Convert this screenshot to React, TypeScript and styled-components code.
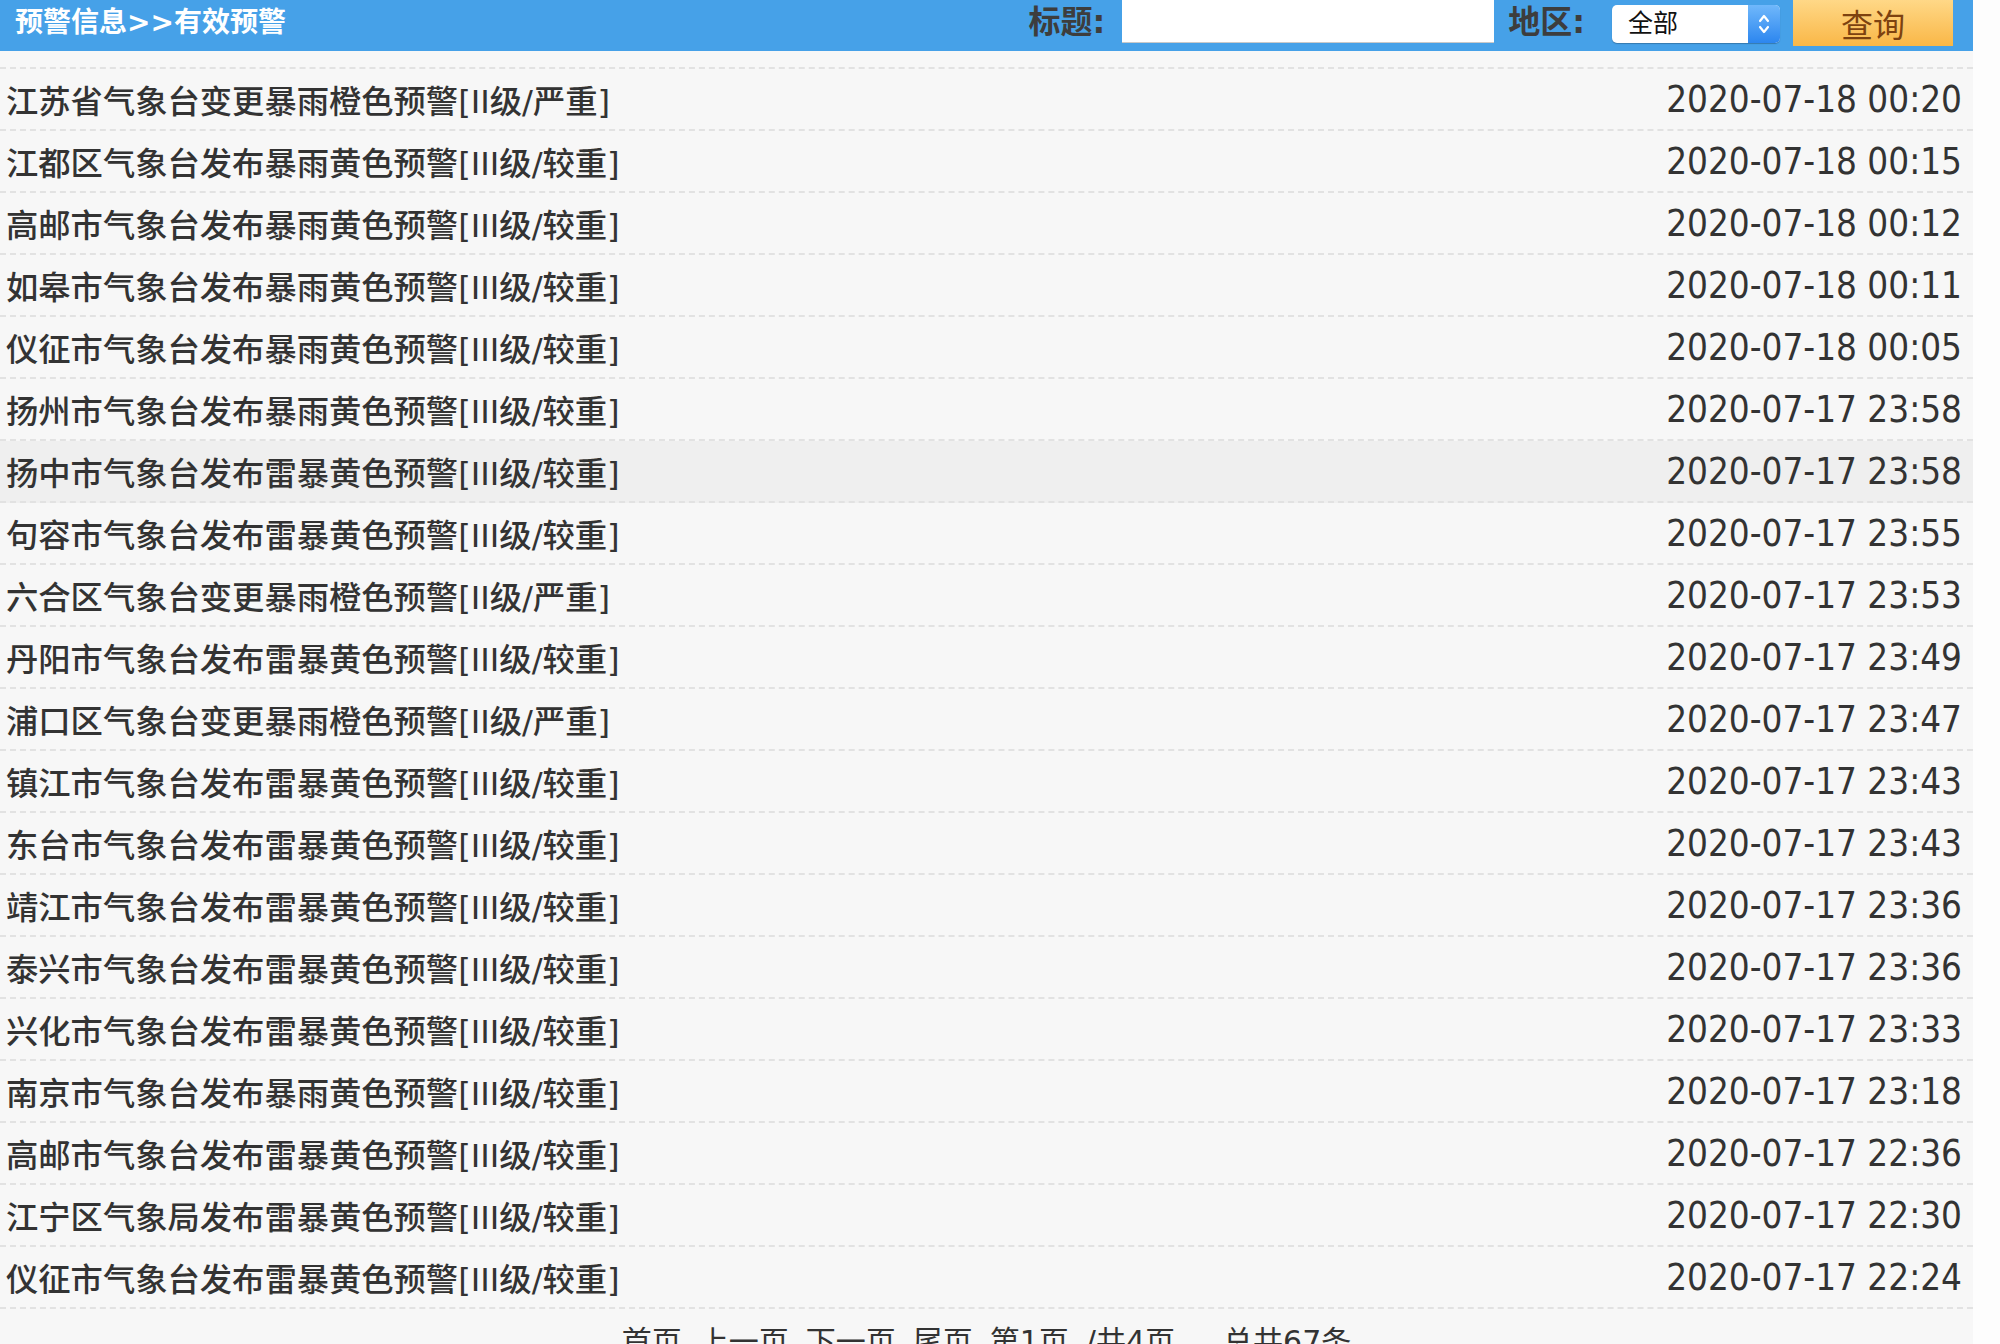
import React from 'react';
import styled, { createGlobalStyle } from 'styled-components';

const GlobalStyle = createGlobalStyle`
  html, body {
    margin: 0;
    padding: 0;
    background: #fdfdfd;
  }
  body {
    font-family: "DejaVu Sans", "Noto Sans CJK SC", sans-serif;
    color: #333;
    overflow: hidden;
  }
`;

const Page = styled.div`
  width: 1973px;
  min-height: 1344px;
  background: #f7f7f7;
`;

const Header = styled.header`
  height: 51px;
  background: #46a1e8;
  display: flex;
  align-items: flex-start;
  padding: 0 20px 0 15px;
  box-sizing: border-box;
`;

const Crumb = styled.div`
  flex: 1;
  font-size: 28px;
  font-weight: bold;
  color: #fff;
  line-height: 46px;
  white-space: nowrap;
`;

const Label = styled.label<{ $gap: number }>`
  font-size: 32px;
  font-weight: bold;
  color: #3d3d3d;
  line-height: 44px;
  margin-right: ${(p) => p.$gap}px;
  white-space: nowrap;
`;

const TitleInput = styled.input`
  width: 372px;
  height: 43px;
  box-sizing: border-box;
  border: none;
  border-bottom: 1px solid #c9c9c9;
  background: #fff;
  margin: 0 14px 0 0;
  padding: 0 8px;
  outline: none;
  font-size: 24px;
`;

const Select = styled.div`
  width: 168px;
  height: 38px;
  margin: 5px 13px 0 0;
  display: flex;
  background: #fff;
  border-radius: 5px;
  box-shadow: 0 1px 1px rgba(0, 0, 0, 0.25);
  overflow: hidden;
`;

const SelectValue = styled.span`
  flex: 1;
  padding-left: 16px;
  font-size: 25px;
  line-height: 38px;
  color: #111;
`;

const Stepper = styled.span`
  width: 32px;
  display: flex;
  align-items: center;
  justify-content: center;
  background: linear-gradient(#70b8fb, #2c86ef);
`;

const SearchButton = styled.button`
  width: 160px;
  height: 46px;
  border: none;
  background: linear-gradient(#ffd887, #f9b747);
  color: #7d4210;
  font-family: "Noto Sans CJK SC", sans-serif;
  font-size: 32px;
  line-height: 44px;
  padding: 0;
`;

const List = styled.ul`
  list-style: none;
  margin: 16px 0 0;
  padding: 0;
  border-top: 2px dashed #e2e2e2;
`;

const Row = styled.li<{ $active?: boolean }>`
  height: 60px;
  display: flex;
  align-items: center;
  justify-content: space-between;
  padding: 0 11px 0 6px;
  border-bottom: 2px dashed #e2e2e2;
  background: ${(p) => (p.$active ? '#efefef' : 'transparent')};
`;

const RowTitle = styled.span`
  font-size: 32.3px;
  font-weight: 500;
  white-space: nowrap;
`;

const RowTime = styled.span`
  font-family: "DejaVu Sans Condensed", "DejaVu Sans", sans-serif;
  font-stretch: condensed;
  font-size: 36.5px;
  white-space: nowrap;
`;

const Pager = styled.div`
  display: flex;
  justify-content: center;
  gap: 17px;
  padding-top: 2px;
  font-size: 30px;
  line-height: 62px;
  color: #333;
`;

const PagerItem = styled.span<{ $wide?: boolean }>`
  margin-left: ${(p) => (p.$wide ? 31 : 0)}px;
  white-space: nowrap;
`;

const rows: [string, string][] = [
  ['江苏省气象台变更暴雨橙色预警[II级/严重]', '2020-07-18 00:20'],
  ['江都区气象台发布暴雨黄色预警[III级/较重]', '2020-07-18 00:15'],
  ['高邮市气象台发布暴雨黄色预警[III级/较重]', '2020-07-18 00:12'],
  ['如皋市气象台发布暴雨黄色预警[III级/较重]', '2020-07-18 00:11'],
  ['仪征市气象台发布暴雨黄色预警[III级/较重]', '2020-07-18 00:05'],
  ['扬州市气象台发布暴雨黄色预警[III级/较重]', '2020-07-17 23:58'],
  ['扬中市气象台发布雷暴黄色预警[III级/较重]', '2020-07-17 23:58'],
  ['句容市气象台发布雷暴黄色预警[III级/较重]', '2020-07-17 23:55'],
  ['六合区气象台变更暴雨橙色预警[II级/严重]', '2020-07-17 23:53'],
  ['丹阳市气象台发布雷暴黄色预警[III级/较重]', '2020-07-17 23:49'],
  ['浦口区气象台变更暴雨橙色预警[II级/严重]', '2020-07-17 23:47'],
  ['镇江市气象台发布雷暴黄色预警[III级/较重]', '2020-07-17 23:43'],
  ['东台市气象台发布雷暴黄色预警[III级/较重]', '2020-07-17 23:43'],
  ['靖江市气象台发布雷暴黄色预警[III级/较重]', '2020-07-17 23:36'],
  ['泰兴市气象台发布雷暴黄色预警[III级/较重]', '2020-07-17 23:36'],
  ['兴化市气象台发布雷暴黄色预警[III级/较重]', '2020-07-17 23:33'],
  ['南京市气象台发布暴雨黄色预警[III级/较重]', '2020-07-17 23:18'],
  ['高邮市气象台发布雷暴黄色预警[III级/较重]', '2020-07-17 22:36'],
  ['江宁区气象局发布雷暴黄色预警[III级/较重]', '2020-07-17 22:30'],
  ['仪征市气象台发布雷暴黄色预警[III级/较重]', '2020-07-17 22:24'],
];

const StepperIcon = () => (
  <svg width="14" height="26" viewBox="0 0 14 26" fill="none" stroke="#fff" strokeWidth="2.2" strokeLinecap="round" strokeLinejoin="round">
    <path d="M3 10 L7 5 L11 10" />
    <path d="M3 16 L7 21 L11 16" />
  </svg>
);

export default function App() {
  return (
    <Page>
      <GlobalStyle />
      <Header>
        <Crumb>预警信息&gt;&gt;有效预警</Crumb>
        <Label $gap={17}>标题:</Label>
        <TitleInput type="text" />
        <Label $gap={27}>地区:</Label>
        <Select>
          <SelectValue>全部</SelectValue>
          <Stepper>
            <StepperIcon />
          </Stepper>
        </Select>
        <SearchButton>查询</SearchButton>
      </Header>
      <List>
        {rows.map(([title, time], i) => (
          <Row key={i} $active={i === 6}>
            <RowTitle>{title}</RowTitle>
            <RowTime>{time}</RowTime>
          </Row>
        ))}
      </List>
      <Pager>
        <PagerItem>首页</PagerItem>
        <PagerItem>上一页</PagerItem>
        <PagerItem>下一页</PagerItem>
        <PagerItem>尾页</PagerItem>
        <PagerItem>第1页</PagerItem>
        <PagerItem>/共4页</PagerItem>
        <PagerItem $wide>总共67条</PagerItem>
      </Pager>
    </Page>
  );
}
